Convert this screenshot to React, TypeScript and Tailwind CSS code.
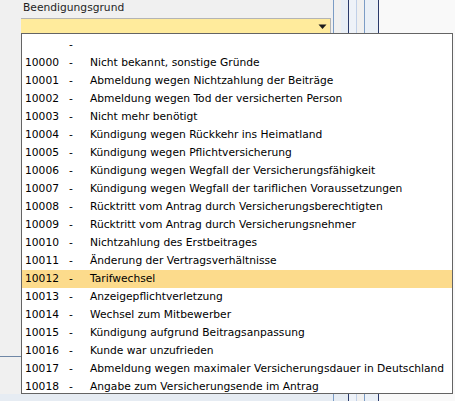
import React from "react";

const items: [string, string][] = [
  ["10000", "Nicht bekannt, sonstige Gründe"],
  ["10001", "Abmeldung wegen Nichtzahlung der Beiträge"],
  ["10002", "Abmeldung wegen Tod der versicherten Person"],
  ["10003", "Nicht mehr benötigt"],
  ["10004", "Kündigung wegen Rückkehr ins Heimatland"],
  ["10005", "Kündigung wegen Pflichtversicherung"],
  ["10006", "Kündigung wegen Wegfall der Versicherungsfähigkeit"],
  ["10007", "Kündigung wegen Wegfall der tariflichen Voraussetzungen"],
  ["10008", "Rücktritt vom Antrag durch Versicherungsberechtigten"],
  ["10009", "Rücktritt vom Antrag durch Versicherungsnehmer"],
  ["10010", "Nichtzahlung des Erstbeitrages"],
  ["10011", "Änderung der Vertragsverhältnisse"],
  ["10012", "Tarifwechsel"],
  ["10013", "Anzeigepflichtverletzung"],
  ["10014", "Wechsel zum Mitbewerber"],
  ["10015", "Kündigung aufgrund Beitragsanpassung"],
  ["10016", "Kunde war unzufrieden"],
  ["10017", "Abmeldung wegen maximaler Versicherungsdauer in Deutschland"],
  ["10018", "Angabe zum Versicherungsende im Antrag"],
];

export default function App() {
  return (
    <div
      className="relative w-[455px] h-[401px] overflow-hidden flex bg-[#f0f0f0] text-[10.7px] text-black"
      style={{ fontFamily: '"DejaVu Sans", Verdana, sans-serif' }}
    >
      {/* left panel */}
      <div className="w-[333px] h-full flex flex-col">
        <div className="pl-[23px] pt-[1px] h-[18px] leading-[14px] text-[#1e1e1e]">Beendigungsgrund</div>
        <div className="ml-[21px] w-[310px] h-[16px] bg-[#ffeb9c] border-t border-r border-[#b4b4b4] flex items-center justify-end pr-[3px]">
          <svg width="9" height="6" viewBox="0 0 9 6">
            <path d="M0.5 0.5 H8.5 L4.5 5 Z" fill="#1b1b1b" />
          </svg>
        </div>
        <div className="flex-1" />
        <div className="h-px bg-[#6f87a6] mb-[37px]" />
        <div className="h-[7px] bg-[#e6ecf3]" />
      </div>
      {/* right grid columns */}
      <div className="w-px h-full bg-[#7b9cc5]" />
      <div className="w-[7px] h-full flex flex-col">
        <div className="flex-1 bg-[#f0f0f0]" />
        <div className="h-[7px] bg-[#e6ecf3]" />
      </div>
      <div className="w-[7px] h-full flex flex-col">
        <div className="flex-1 bg-[#e8eef6]" />
        <div className="h-[7px] bg-[#e6ecf3]" />
      </div>
      <div className="w-px h-full bg-[#2a3a6a]" />
      <div className="w-[7px] h-full bg-[#eef2f8]" />
      <div className="w-px h-full bg-[#c0d0e8]" />
      <div className="w-[7px] h-full bg-[#f0f0f0]" />
      <div className="w-px h-full bg-[#7b9cc5]" />
      <div className="w-[13px] h-full bg-[#eaf0f7]" />
      <div className="w-px h-full bg-[#2a3a6a]" />
      <div className="flex-1 h-full bg-[#f9f9f9]" />

      {/* dropdown list */}
      <div className="absolute left-[21px] top-[33px] w-[432px] h-[361px] border border-[#646464] bg-white overflow-hidden pt-[2px]">
        <div className="h-[18px] flex items-center">
          <span className="w-[47px]" />
          <span className="w-[21px]">-</span>
        </div>
        {items.map(([code, text]) => (
          <div
            key={code}
            className={`h-[18px] flex items-center whitespace-nowrap ${code === "10012" ? "bg-[#fcdb8c]" : ""}`}
          >
            <span className="w-[47px] pl-[3px]">{code}</span>
            <span className="w-[21px]">-</span>
            <span>{text}</span>
          </div>
        ))}
      </div>
    </div>
  );
}
